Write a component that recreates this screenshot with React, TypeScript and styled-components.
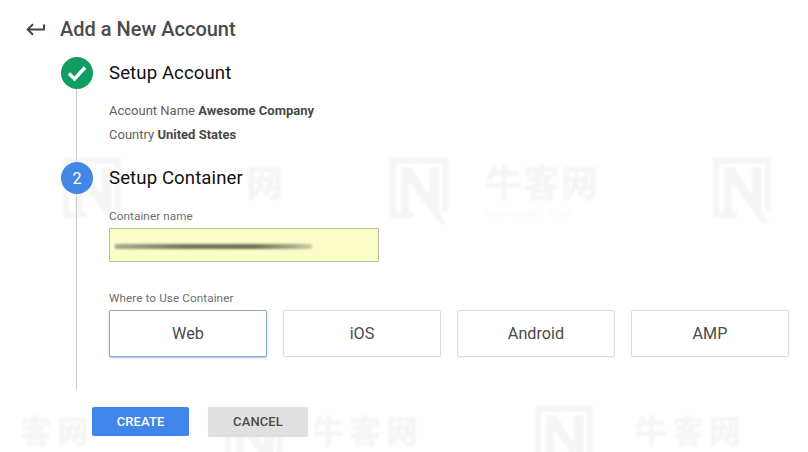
import React from "react";
import styled, { createGlobalStyle } from "styled-components";

const Global = createGlobalStyle`
  html, body { margin: 0; padding: 0; background: #fff; }
  body { font-family: Roboto, "Liberation Sans", sans-serif; overflow: hidden; }
  * { box-sizing: border-box; }
`;

const Page = styled.div`
  position: relative;
  width: 808px;
  height: 452px;
  overflow: hidden;
  background: #fff;
  padding: 16px 0 0 26px;
`;

const Watermark = styled.div<{ $x: number; $y: number }>`
  position: absolute;
  left: ${(p) => p.$x}px;
  top: ${(p) => p.$y}px;
  color: #f5f5f5;
  filter: blur(1px);
  pointer-events: none;
`;

const MarkText = styled.div<{ $low?: boolean }>`
  font-family: "Noto Sans CJK SC", sans-serif;
  font-weight: 900;
  font-size: ${(p) => (p.$low ? 32 : 37)}px;
  line-height: 38px;
  letter-spacing: ${(p) => (p.$low ? 5 : 1)}px;
  white-space: nowrap;
`;

const MarkSub = styled.div`
  margin-top: 8px;
  font-size: 11px;
  line-height: 12px;
  letter-spacing: 1.5px;
  color: #f7f7f7;
  white-space: nowrap;
`;

const Content = styled.div`
  position: relative;
`;

const Header = styled.header`
  display: flex;
  align-items: center;
  gap: 15px;
  height: 26px;
`;

const Title = styled.h1`
  margin: 0;
  font-size: 20px;
  font-weight: 500;
  line-height: 26px;
  color: #4a4a4a;
`;

const Steps = styled.div`
  margin: 15px 0 0 35px;
  width: 730px;
`;

const Step = styled.section`
  display: flex;
  gap: 16px;
`;

const Rail = styled.div`
  width: 32px;
  flex: none;
  display: flex;
  flex-direction: column;
  align-items: center;
`;

const Badge = styled.div<{ $color: string }>`
  width: 32px;
  height: 32px;
  flex: none;
  border-radius: 50%;
  background: ${(p) => p.$color};
  color: #fff;
  display: flex;
  align-items: center;
  justify-content: center;
  font-size: 16px;
`;

const Line = styled.div`
  flex: 1;
  width: 1px;
  margin-right: 1px;
  background: #c9c9c9;
`;

const Body = styled.div<{ $h: number }>`
  flex: 1;
  height: ${(p) => p.$h}px;
`;

const StepTitle = styled.h2`
  margin: 0;
  font-size: 18.6px;
  font-weight: 400;
  line-height: 32px;
  color: #111;
  letter-spacing: 0.1px;
`;

const Info = styled.p<{ $top: number }>`
  margin: ${(p) => p.$top}px 0 0;
  font-size: 13px;
  line-height: 16px;
  color: #5f5f5f;
  b { font-weight: 700; color: #484848; }
`;

const Label = styled.label<{ $top: number }>`
  display: block;
  margin-top: ${(p) => p.$top}px;
  font-size: 11.7px;
  line-height: 14px;
  color: #6e6e6e;
  letter-spacing: 0.1px;
`;

const Field = styled.div`
  width: 270px;
  height: 34px;
  margin-top: 5px;
  padding-left: 5px;
  display: flex;
  align-items: center;
  background: #fbfdc6;
  border: 1px solid #bdbd93;
  border-radius: 1px;
`;

const Redacted = styled.div`
  width: 197px;
  height: 5px;
  margin-top: 3px;
  background: linear-gradient(90deg, #a9aa90 0%, #74755f 35%, #6f7058 70%, #a6a78a 90%, #cfd0a8 100%);
  filter: blur(0.8px);
`;

const Platforms = styled.div`
  display: flex;
  gap: 16px;
  margin-top: 5px;
`;

const Platform = styled.button<{ $active?: boolean }>`
  width: 158px;
  height: 47px;
  background: #fff;
  border: 1px solid ${(p) => (p.$active ? "#8aa9d6" : "#dcdcdc")};
  border-radius: 2px;
  box-shadow: ${(p) => (p.$active ? "0 1px 2px rgba(66,110,180,.45)" : "0 1px 0 rgba(0,0,0,.03)")};
  font-family: inherit;
  font-size: 16.2px;
  color: #4a4a4a;
  padding: 0;
`;

const Actions = styled.div`
  display: flex;
  gap: 19px;
  margin: 17px 0 0 66px;
`;

const Action = styled.button<{ $primary?: boolean }>`
  width: ${(p) => (p.$primary ? 97 : 100)}px;
  height: ${(p) => (p.$primary ? 29 : 30)}px;
  border: none;
  border-radius: 2px;
  background: ${(p) => (p.$primary ? "#4086ea" : "#e0e0e0")};
  color: ${(p) => (p.$primary ? "#fff" : "#4a4a4a")};
  font-family: inherit;
  font-size: 13px;
  font-weight: 500;
  letter-spacing: 0.1px;
  padding: 0 0 1px;
  box-shadow: 0 0 1px rgba(0, 0, 0, 0.15);
`;

const NLogo = ({ size = 64 }: { size?: number }) => (
  <svg width={size} height={size * 1.15} viewBox="0 0 64 74" fill="none">
    <path d="M3 3h58v54l-6 0v-48H9v48h18v6H3z" fill="currentColor" />
    <path d="M14 12h10l18 28V12h10v44l8 14-8-2-30-40v34H14z" fill="currentColor" />
  </svg>
);

const marks: { x: number; y: number; kind: "n" | "t"; text?: string; sub?: boolean; low?: boolean }[] = [
  { x: 60, y: 155, kind: "n" },
  { x: 246, y: 162, kind: "t", text: "网" },
  { x: 387, y: 155, kind: "n" },
  { x: 485, y: 162, kind: "t", text: "牛客网", sub: true },
  { x: 710, y: 155, kind: "n" },
  { x: 20, y: 410, kind: "t", text: "客网", low: true },
  { x: 222, y: 405, kind: "n" },
  { x: 312, y: 410, kind: "t", text: "牛客网", low: true },
  { x: 532, y: 403, kind: "n" },
  { x: 635, y: 410, kind: "t", text: "牛客网", low: true },
];

export default function App() {
  return (
    <Page>
      <Global />
      {marks.map((m) => (
        <Watermark key={`${m.x}-${m.y}`} $x={m.x} $y={m.y}>
          {m.kind === "n" ? (
            <NLogo />
          ) : (
            <>
              <MarkText $low={m.low}>{m.text}</MarkText>
              {m.sub && <MarkSub>nowcoder.com</MarkSub>}
            </>
          )}
        </Watermark>
      ))}
      <Content>
        <Header>
          <svg width="19" height="15" viewBox="0 0 19 15" fill="none" stroke="#444" strokeWidth="2">
            <path d="M18 2.5v5H2" />
            <path d="M7 2.2 1.7 7.5 7 12.8" />
          </svg>
          <Title>Add a New Account</Title>
        </Header>
        <Steps>
          <Step>
            <Rail>
              <Badge $color="#0f9d61">
                <svg width="20" height="16" viewBox="0 0 20 16" fill="none" stroke="#fff" strokeWidth="3.4">
                  <path d="M2 8.5 7.5 14 18 2.5" />
                </svg>
              </Badge>
              <Line />
            </Rail>
            <Body $h={105}>
              <StepTitle>Setup Account</StepTitle>
              <Info $top={14}>
                Account Name <b>Awesome Company</b>
              </Info>
              <Info $top={8}>
                Country <b>United States</b>
              </Info>
            </Body>
          </Step>
          <Step>
            <Rail>
              <Badge $color="#4286e6">2</Badge>
              <Line />
            </Rail>
            <Body $h={228}>
              <StepTitle>Setup Container</StepTitle>
              <Label $top={15}>Container name</Label>
              <Field>
                <Redacted />
              </Field>
              <Label $top={29}>Where to Use Container</Label>
              <Platforms>
                <Platform $active>Web</Platform>
                <Platform>iOS</Platform>
                <Platform>Android</Platform>
                <Platform>AMP</Platform>
              </Platforms>
            </Body>
          </Step>
        </Steps>
        <Actions>
          <Action $primary>CREATE</Action>
          <Action>CANCEL</Action>
        </Actions>
      </Content>
    </Page>
  );
}
